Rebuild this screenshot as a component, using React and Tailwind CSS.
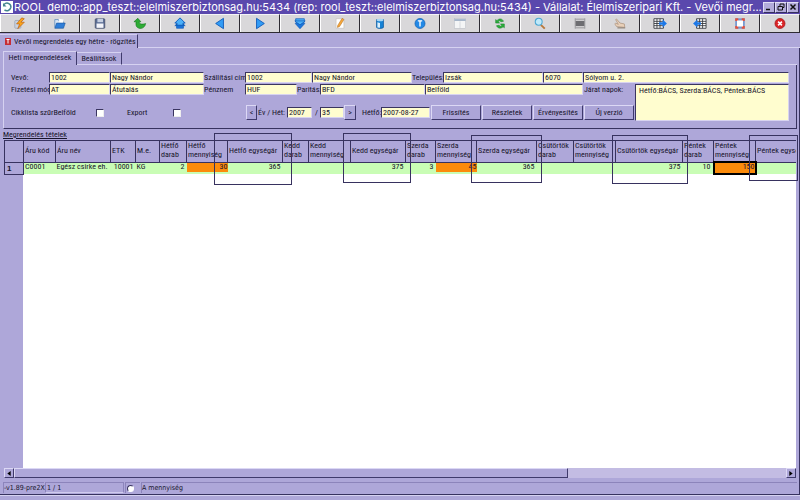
import React from "react";

const ICONS = [
  ["Futtatás", <><rect x="2" y="4" width="7" height="9" rx="1" fill="#c9d3e2" stroke="#8d96a8" strokeWidth=".7" /><path d="M10 1 4 8h3.500L5.500 13.500 13 6H9l4-4z" fill="#f9a41c" stroke="#b8560c" strokeWidth=".7" /></>],
  ["Megnyitás", <><path d="M2 12V3h4l1 1.500h5V7" fill="#dbe8f6" stroke="#4b80b8" strokeWidth=".8" /><path d="M2 13 4 7h10l-2 6z" fill="#2f7ed8" stroke="#1b549c" strokeWidth=".7" /><path d="M7 2l5 1v3H7z" fill="#fff" /></>],
  ["Mentés", <><rect x="2.500" y="2" width="11" height="11" rx="1" fill="#5a6c94" stroke="#3c4661" strokeWidth=".8" /><rect x="5" y="2" width="6.500" height="4" fill="#c7d0e2" /><rect x="4" y="7.500" width="8" height="5" fill="#f4f5fa" /></>],
  ["Visszavonás", <path d="M1 5.500 5.500 1.500 9 5.500H7c0 2.500 3 3.500 7.500 2-.5 4-4 6.500-7.500 5.500S3 9.500 3.500 5.500z" fill="#2dac35" stroke="#14761d" strokeWidth=".7" />],
  ["Első", <><path d="M4 8h8v5H4zM8 4.500 14 10H2z" fill="#1b76dc" stroke="#0a57b7" strokeWidth=".7" /><path d="M8 1 14 7h-2.500v2.500h-7V7H2z" fill="#4cb0f8" stroke="#0a57b7" strokeWidth="1" /></>],
  ["Előző", <path d="M3 7.500 12 1.500v12z" fill="#329cf5" stroke="#0a57b7" strokeWidth="1" strokeLinejoin="round" />],
  ["Következő", <path d="M13 7.500 4 1.500v12z" fill="#329cf5" stroke="#0a57b7" strokeWidth="1" strokeLinejoin="round" />],
  ["Utolsó", <><path d="M3 2h10v4H3z" fill="#4cb0f8" stroke="#0a57b7" strokeWidth=".8" /><path d="M2 4.500h12L8 10z" fill="#4cb0f8" stroke="#0a57b7" strokeWidth=".8" /><path d="M2.500 7.500 5 7l3 2 3-2 2.500.5L8 13.500z" fill="#1b76dc" stroke="#0a57b7" strokeWidth=".8" /></>],
  ["Szerkesztés", <><path d="M3.500 2h9v11h-9z" fill="#fff" stroke="#b9b6b3" strokeWidth=".6" /><path d="M10.500 1.500 12.500 3 7.500 11l-2.500 1 .5-2.500z" fill="#f5a83b" stroke="#b2691a" strokeWidth=".6" /></>],
  ["Adatbázis", <><path d="M4 3v9c1 1.500 7 1.500 8 0V3z" fill="#1682d5" stroke="#0a559b" strokeWidth=".8" /><ellipse cx="8" cy="3.500" rx="4" ry="1.500" fill="#a9d7f5" /><path d="M5 6v6l3 .5V7z" fill="#dceffa" /></>],
  ["Információ", <><circle cx="8" cy="7.500" r="5.800" fill="#2389e6" stroke="#1560ae" strokeWidth=".8" /><path d="M5.500 4.500h5M8 4.500v6.500" stroke="#fff" strokeWidth="1.600" /></>],
  ["Naptár", <><rect x="1.500" y="2" width="13" height="11" fill="#f4f5f6" stroke="#b8bdc4" strokeWidth=".6" /><path d="M1.500 3.500h13" stroke="#9dafc6" strokeWidth="2" /><path d="M8 5v8" stroke="#c5c9cf" strokeWidth=".7" /></>],
  ["Frissítés", <path d="M3 7V3l1.500 1.200C7 1 11 2 12 5l-3 .5C8 4 7 4 6 5.500L7.500 7zM13 8v4.500l-1.500-1.300C9 14 5 13 4 10l3-.5c1 1.500 2 1.500 3 0L8.500 8z" fill="#2daf3a" stroke="#14802a" strokeWidth=".6" />],
  ["Keresés", <><path d="m9 9 4.500 4.500" stroke="#b8793c" strokeWidth="2.200" /><circle cx="6.500" cy="5.500" r="4" fill="#bfe9fa" stroke="#4aa7d3" strokeWidth="1.200" /></>],
  ["Nyomtatás", <><path d="M2.500 1.500v12M13.500 1.500v12M3 2.500h10M3 12.500h10" stroke="#8c8c90" strokeWidth="1" /><path d="M3 4.500h10v6H3z" fill="#6d6d71" /></>],
  ["Kijelölés", <><path d="M4 11 2 8l1-1 3 1.500L3 3l1-.7L8 7l5 1 .5 4z" fill="#e8d0b9" stroke="#a98f7a" strokeWidth=".8" /><path d="M5 12.500h9" stroke="#96897e" strokeWidth="1.500" /></>],
  ["Exportálás", <><path d="M1 2h11v11H1zM1 5h11M1 7.500h11M1 10h11M4.500 2v11M8 2v11" fill="#fff" stroke="#34383e" strokeWidth="1" /><path d="M7 6h4V3L16 7.500 11 12V9H7z" fill="#1c78e8" /></>],
  ["Importálás", <><path d="M4 2h11v11H4zM4 5h11M4 7.500h11M4 10h11M7.500 2v11M11 2v11" fill="#fff" stroke="#34383e" strokeWidth="1" /><path d="M9 6H5V3L0 7.500 5 12V9h4z" fill="#1c78e8" /></>],
  ["Ablak", <><rect x="2.500" y="1.500" width="11" height="12" fill="#7598d1" /><path d="M2.500 1.500h3.500v3H2.500zM10 1.500h3.500v3H10zM2.500 10.500h3.500v3H2.500zM10 10.500h3.500v3H10z" fill="#e2513e" /><rect x="4.500" y="4" width="7" height="7" fill="#fff" /></>],
  ["Kilépés", <><circle cx="8" cy="7.500" r="5.800" fill="#d92427" stroke="#9f1418" strokeWidth=".8" /><path d="m5.800 5.300 4.400 4.400m0-4.400L5.800 9.700" stroke="#fff" strokeWidth="1.800" /></>],
];

const COLUMNS = [
  ["Áru kód", "w-[32px]", "C0001"],
  ["Áru név", "w-[55px]", "Egész csirke eh."],
  ["ETK", "w-[25px]", "10001", "num"],
  ["M.e.", "w-[24px]", "KG"],
  ["Hétfő darab", "w-[27px]", "2", "num"],
  ["Hétfő mennyiség", "w-[41px]", "30", "orange"],
  ["Hétfő egységár", "w-[55px]", "365", "num"],
  ["Kedd darab", "w-[26px]", "", "num"],
  ["Kedd mennyiség", "w-[42px]", "", "num"],
  ["Kedd egységár", "w-[55px]", "375", "num"],
  ["Szerda darab", "w-[30px]", "3", "num"],
  ["Szerda mennyiség", "w-[41px]", "45", "orange"],
  ["Szerda egységár", "w-[60px]", "365", "num"],
  ["Csütörtök darab", "w-[37px]", "", "num"],
  ["Csütörtök mennyiség", "w-[42px]", "", "num"],
  ["Csütörtök egységár", "w-[67px]", "375", "num"],
  ["Péntek darab", "w-[31px]", "10", "num"],
  ["Péntek mennyiség", "w-[42px]", "150", "active"],
  ["Péntek egységár", "w-[60px]", "", "num"],
];

const MARKS = [
  "left-[210px] top-[-7px] w-[78px] h-[52px]",
  "left-[339px] top-[-7px] w-[68px] h-[50px]",
  "left-[467px] top-[-5px] w-[71px] h-[48px]",
  "left-[608px] top-[-5px] w-[76px] h-[49px]",
  "left-[745px] top-[-5px] w-[49px] h-[46px]",
];

function Field({ label, value, width, labelWidth = "" }) {
  return (
    <>
      {label && <label htmlFor={label} className={`shrink-0 whitespace-nowrap ${labelWidth}`}>{label}</label>}
      <input
        id={label}
        aria-label={label ? undefined : value}
        defaultValue={value}
        className={`h-[11px] min-w-0 border-l border-t border-[#3a3560] border-b border-r border-b-[#d8d4f0] border-r-[#d8d4f0] bg-[#fffdcf] px-px outline-none ${width}`}
      />
    </>
  );
}

function PushButton({ children, width }) {
  return (
    <button className={`h-[15px] shrink-0 border border-[#dcd8f5] border-b-[#3f3a6c] border-r-[#3f3a6c] bg-[#aca5d8] text-center ${width}`}>
      {children}
    </button>
  );
}

function Check({ label, gap }) {
  return (
    <label className={`flex shrink-0 items-center justify-between whitespace-nowrap ${gap}`}>
      {label}
      <input type="checkbox" className="size-[8px] appearance-none border border-[#3a3560] border-b-[#eee] border-r-[#eee] bg-white" />
    </label>
  );
}

function WindowButton({ label, children }) {
  return (
    <button aria-label={label} className="flex h-[11px] w-[12px] items-center justify-center border border-[#e2dff6] border-b-[#37305f] border-r-[#37305f] bg-[#b3acdb]">
      <svg viewBox="0 0 8 8" className="size-[8px]" fill="none" stroke="#111">{children}</svg>
    </button>
  );
}

export default function App() {
  return (
    <div className="flex h-screen flex-col overflow-hidden bg-[#aea7d9] font-['Roboto_Condensed','Roboto',sans-serif] text-[8px] leading-[9px] text-[#17142b]">
      <header className="flex h-[14px] shrink-0 items-center gap-px bg-[#5a48ad] pl-px pr-px">
        <svg viewBox="0 0 12 12" className="size-[12px] shrink-0 bg-white">
          <path d="M3 3.500C6 .5 10.500 3 9.800 6.500 9 9.500 6 10.500 3.500 9" fill="none" stroke="#46858e" strokeWidth="1.500" />
          <path d="M2 2v3.500h3.500z" fill="#46858e" />
        </svg>
        <h1 className="min-w-0 flex-1 whitespace-nowrap font-['Inter',sans-serif] text-[11px] leading-[14px] text-white">
          ROOL demo::app_teszt::elelmiszerbiztonsag.hu:5434 (rep: rool_teszt::elelmiszerbiztonsag.hu:5434) - Vállalat: Élelmiszeripari Kft. - Vevői megr...
        </h1>
        <div className="flex shrink-0">
          <WindowButton label="Kis méret"><path d="M1 6.500h4" strokeWidth="1.500" /></WindowButton>
          <WindowButton label="Előző méret"><path d="M3 3V1h4v3.500H5.500M1 3.500h4.500V7H1z" /></WindowButton>
          <WindowButton label="Bezárás"><path d="m1.500 1.500 5 5m0-5-5 5" strokeWidth="1.500" /></WindowButton>
        </div>
      </header>

      <nav className="flex h-[19px] shrink-0 border-b border-[#2d2b33] bg-[#d9d8da]">
        {ICONS.map(([name, art]) => (
          <button key={name} aria-label={name} className="flex flex-1 items-center justify-center border-l border-r border-t border-l-white border-r-[#2d2b33] border-t-[#f4f4f6]">
            <svg viewBox="0 0 16 15" className="h-[13px] w-[14px]" fill="none">{art}</svg>
          </button>
        ))}
      </nav>

      <div className="flex h-[15px] shrink-0 pt-px">
        <button className="flex w-[138px] items-center gap-[3px] whitespace-nowrap border-r border-t border-r-[#3f3a6c] border-t-[#d2cdef] pl-[5px]">
          <svg viewBox="0 0 6 7" className="h-[7px] w-[6px]"><path d="M0 0h6v7H0z" fill="#c52d36" /><path d="M1.500 1.500h3M3 1.500v4" stroke="#fff" /></svg>
          Vevői megrendelés egy hétre - rögzítés
        </button>
        <div className="flex-1 border-b border-[#d6d2f1]" />
      </div>

      <main className="flex min-h-0 flex-1 flex-col border-b border-r border-[#37325f] pl-[3px] pr-[2px]">
        <div className="flex h-[17px] shrink-0 pt-[3px]">
          <button className="w-[74px] border-l border-r border-t border-l-[#d6d2f1] border-r-[#3f3a6c] border-t-[#d6d2f1] pb-[2px]">Heti megrendelések</button>
          <button className="mt-px w-[45px] border-b border-r border-t border-b-[#d6d2f1] border-r-[#3f3a6c] border-t-[#d6d2f1] pb-px">Beállítások</button>
          <div className="flex-1 border-b border-[#d6d2f1]" />
        </div>

        <form className="flex h-[64px] shrink-0 flex-col border-b border-l border-r border-b-[#37325f] border-l-[#d6d2f1] border-r-[#37325f] pl-[7px] pr-[7px] pt-[7px]">
          <div className="flex shrink-0 items-center">
            <Field label="Vevő:" labelWidth="w-[38px]" value="1002" width="w-[61px]" />
            <Field value="Nagy Nándor" width="w-[94px]" />
            <Field label="Szállítási cím:" labelWidth="w-[41px]" value="1002" width="w-[67px]" />
            <Field value="Nagy Nándor" width="w-[100px]" />
            <Field label="Település:" labelWidth="w-[31px]" value="Izsák" width="w-[100px]" />
            <Field value="6070" width="w-[40px]" />
            <Field value="Sólyom u. 2." width="flex-1" />
          </div>
          <div className="flex pt-px">
            <div className="flex w-[624px] shrink-0 flex-col gap-[10px]">
              <div className="flex items-center">
                <Field label="Fizetési mód" labelWidth="w-[38px]" value="AT" width="w-[61px]" />
                <Field value="Átutalás" width="w-[94px]" />
                <Field label="Pénznem" labelWidth="w-[41px]" value="HUF" width="w-[52px]" />
                <Field label="Paritás:" labelWidth="w-[23px]" value="BFD" width="w-[105px]" />
                <Field value="Belföld" width="w-[158px]" />
                <label htmlFor="route-days" className="pl-px">Járat napok:</label>
              </div>
              <div className="flex items-center">
                <Check label="Cikklista szűrBelföld" gap="w-[93px]" />
                <span className="w-[23px]" />
                <Check label="Export" gap="w-[54px]" />
                <span className="w-[65px]" />
                <PushButton width="w-[11px]">&lt;</PushButton>
                <Field label="Év / Hét:" labelWidth="w-[30px] pl-px" value="2007" width="w-[25px]" />
                <Field label="/" labelWidth="w-[8px] pl-[3px]" value="35" width="w-[24px]" />
                <PushButton width="w-[12px]">&gt;</PushButton>
                <Field label="Hétfő:" labelWidth="w-[25px] pl-[6px]" value="2007-08-27" width="w-[49px]" />
                <div className="flex flex-1 gap-px pl-px">
                  <PushButton width="w-[50px]">Frissítés</PushButton>
                  <PushButton width="w-[50px]">Részletek</PushButton>
                  <PushButton width="w-[50px]">Érvényesítés</PushButton>
                  <PushButton width="w-[50px]">Új verzió</PushButton>
                </div>
              </div>
            </div>
            <textarea
              id="route-days"
              defaultValue="Hétfő:BÁCS, Szerda:BÁCS, Péntek:BÁCS"
              className="h-[37px] min-w-0 flex-1 resize-none border border-[#3a3560] border-b-[#d8d4f0] border-r-[#d8d4f0] bg-[#fffdcf] px-[3px] py-px outline-none"
            />
          </div>
        </form>

        <h2 className="h-[11px] shrink-0 pt-px underline">Megrendelés tételek</h2>

        <section className="relative mx-px flex min-h-0 flex-1 flex-col">
          <div className="min-h-0 flex-1 overflow-hidden border-t border-[#37325f] bg-[linear-gradient(to_right,#aea7d9_19px,#fff_19px)]">
            <table className="w-[811px] table-fixed border-collapse">
              <thead>
                <tr className="h-[21px] bg-[#aea7d9]">
                  <th className="w-[19px] border-b border-l border-r border-[#37325f]" aria-label="Sor" />
                  {COLUMNS.map(([title, width]) => (
                    <th key={title} className={`border-b border-r border-[#37325f] p-0 pb-[2px] pl-px text-left align-middle font-normal ${width} ${title.includes("egységár") ? "whitespace-nowrap" : ""}`}>{title}</th>
                  ))}
                </tr>
              </thead>
              <tbody>
                <tr className="h-[12px] bg-[#c9fdb5]">
                  <th className="border border-[#37325f] bg-[#aea7d9] p-0 pl-[2px] text-left font-['Liberation_Sans',sans-serif] font-bold">1</th>
                  {COLUMNS.map(([title, , value, kind]) => (
                    <td key={title} className={`whitespace-nowrap p-0 align-top leading-[7px] ${kind ? "text-right" : "pl-px"} ${kind === "active" ? "border-2 border-black bg-[#fb8b0b]" : ""}`}>
                      <div className={kind === "orange" ? "h-[9px] bg-[#fb8b0b]" : kind === "num" ? "pr-[2px]" : ""}>{value}</div>
                    </td>
                  ))}
                </tr>
              </tbody>
            </table>
          </div>
          {MARKS.map((box) => <div key={box} className={`pointer-events-none absolute border border-[#37325f] ${box}`} />)}
          <div className="flex h-[10px] shrink-0 bg-[#c3bce3]">
            <button aria-label="Balra" className="flex w-[10px] items-center justify-center border border-[#dcd8f5] border-b-[#3f3a6c] border-r-[#3f3a6c] bg-[#aea7d9]"><svg viewBox="0 0 4 6" className="h-[5px] w-[4px]"><path d="M4 0v6L0 3z" /></svg></button>
            <div className="w-[70%] border border-[#dcd8f5] border-b-[#3f3a6c] border-r-[#3f3a6c] bg-[#aea7d9]" />
            <div className="flex-1" />
            <button aria-label="Jobbra" className="flex w-[10px] items-center justify-center border border-[#dcd8f5] border-b-[#3f3a6c] border-r-[#3f3a6c] bg-[#aea7d9]"><svg viewBox="0 0 4 6" className="h-[5px] w-[4px]"><path d="M0 0v6l4-3z" /></svg></button>
          </div>
        </section>

        <footer className="mb-px mt-[4px] flex h-[11px] shrink-0 items-center gap-px whitespace-nowrap font-['DejaVu_Sans_Condensed','DejaVu_Sans',sans-serif] text-[7px]">
          <span className="h-full w-[41px] border-l border-t border-[#8c84bb] leading-[10px]">-v1.89-pre2X</span>
          <span className="h-full w-[79px] border border-[#8c84bb] border-b-[#d0cbee] pl-px leading-[10px]">1 / 1</span>
          <label className="flex h-full w-[15px] items-center border-l border-t border-[#8c84bb] pl-px"><input aria-label="Állapot" type="radio" className="size-[7px] appearance-none rounded-full border border-[#3a3560] border-b-white border-r-white bg-white" /></label>
          <span className="h-full flex-1 border-l border-t border-[#8c84bb] leading-[10px]">A mennyiség</span>
        </footer>
      </main>
      <div className="h-[5px] shrink-0 border-t border-[#d6d2f1]" />
    </div>
  );
}
